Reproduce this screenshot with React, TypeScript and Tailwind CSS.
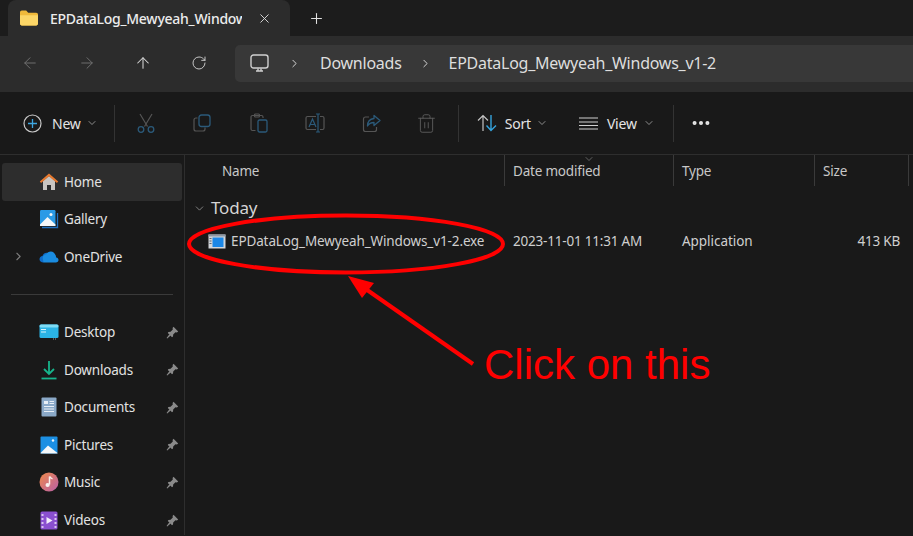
import React from 'react';
import { ArrowLeft, ArrowRight, ArrowUp, ChevronDown, ChevronRight, MoreHorizontal, Plus, RotateCw, Trash2, X } from 'lucide-react';

const FolderIcon = () => (
  <svg width="20" height="16" viewBox="0 0 20 16">
    <path d="M1 2.500C1 1.400 1.800 .6 2.800 .6h4.400l2 2.200h8c1 0 1.800.8 1.800 1.800v9c0 1-.8 1.800-1.800 1.800H2.800C1.800 15.400 1 14.600 1 13.600z" fill="#f0b93a" />
    <path d="M1 5.200h18v8.400c0 1-.8 1.800-1.800 1.800H2.800c-1 0-1.800-.8-1.800-1.800z" fill="#fcd667" />
  </svg>
);

const Pin = () => (
  <svg width="13" height="13" viewBox="0 0 13 13" fill="#8a8a8a">
    <path d="M7.500 .8 12.200 5.500 10.900 6.400 9.400 6.200 7.200 8.400 7 10.600 6 11.200 1.800 7 2.400 6 4.600 5.800 6.800 3.600 6.600 2.100z" />
    <path d="M3.400 8.300 4.700 9.600 1.200 12.600.6 12z" />
  </svg>
);

const HomeIcon = () => (
  <svg width="20" height="20" viewBox="0 0 20 20">
    <path d="M4 9 10 4l6 5v9h-4v-5H8v5H4z" fill="#c9c5c1" />
    <path d="M10 1.500 .8 9.600l1.300 1.300L10 4.200l7.900 6.700 1.300-1.300z" fill="#e8792e" />
  </svg>
);

const GalleryIcon = () => (
  <svg width="20" height="20" viewBox="0 0 20 20">
    <path d="M3 18.500h15.500V4" fill="none" stroke="#1f6fc0" strokeWidth="1.300" />
    <rect x="1" y="1" width="15.500" height="16" rx="1.200" fill="#2a9ae6" />
    <path d="M1 15.500 8.500 8l8 7.500V17H1z" fill="#f4f6f8" />
    <circle cx="12" cy="5.500" r="1.500" fill="#f4f6f8" />
  </svg>
);

const CloudIcon = () => (
  <svg width="20" height="13" viewBox="0 0 20 13">
    <path d="M4.500 12.500C2 12.500 .5 11 .5 9.200 .5 7.500 1.800 6.200 3.500 6 4.300 3.800 6 2.800 7.500 2.800c1.300 0 2.500.7 3.200 1.800z" fill="#0f6cc9" />
    <path d="M4.500 12.500h12.300c1.600 0 2.700-1.100 2.700-2.500s-1-2.400-2.300-2.500C16.800 4 14.500 1.500 11.800 1.500c-2 0-3.600 1-4.500 2.800C5 4.500 3.500 6.500 3.800 8.500z" fill="#1a8ce0" />
  </svg>
);

const DesktopIcon = () => (
  <svg width="20" height="16" viewBox="0 0 20 16">
    <rect x=".5" y=".5" width="19" height="13.500" rx="1.500" fill="#2bb4e6" />
    <rect x=".5" y=".5" width="19" height="3" rx="1.500" fill="#7fdcf5" />
    <rect x="2" y="5" width="5" height="1" fill="#d6f3fb" />
    <rect x="2" y="7.500" width="5" height="1" fill="#d6f3fb" />
    <path d="M14 14.500h1v1h-1zM16 14.500h1v1h-1z" fill="#9a9a9a" />
  </svg>
);

const DownloadIcon = () => (
  <svg width="16" height="20" viewBox="0 0 16 20" fill="none" stroke="#17b58c" strokeWidth="1.800">
    <path d="M8 1v13M3 9l5 5 5-5" />
    <path d="M.5 18.500h15" />
  </svg>
);

const DocumentsIcon = () => (
  <svg width="16" height="20" viewBox="0 0 16 20">
    <rect x=".5" y=".5" width="15" height="19" rx="1" fill="#8ba9c8" />
    <rect x="3" y="4" width="4" height="3" fill="#e8eef5" />
    <path d="M8.500 4.500H13M8.500 6.500H13M3 9.500h10M3 12h10M3 14.500h10" stroke="#e8eef5" />
  </svg>
);

const PicturesIcon = () => (
  <svg width="18" height="18" viewBox="0 0 18 18">
    <rect x=".5" y=".5" width="17" height="17" rx="1" fill="#1c8fe3" />
    <path d="M.5 17 8 9.500l9.500 7.500v.5H.5z" fill="#f4f7fa" />
    <circle cx="13" cy="4.500" r="1.200" fill="#f4f7fa" />
  </svg>
);

const MusicIcon = () => (
  <svg width="20" height="20" viewBox="0 0 20 20">
    <defs>
      <linearGradient id="musicFill" x1="0" y1="0" x2="1" y2="1">
        <stop offset="0" stopColor="#ef8a4a" />
        <stop offset="1" stopColor="#b85ea8" />
      </linearGradient>
    </defs>
    <circle cx="10" cy="10" r="9.500" fill="url(#musicFill)" />
    <path d="M10.500 4.500v8" stroke="#f8f0ee" strokeWidth="1.500" />
    <path d="M10.800 4.500c.5 1.800 2 2 2.700 2.300" stroke="#f8f0ee" strokeWidth="1.300" fill="none" />
    <circle cx="8.600" cy="13" r="2.100" fill="#f8f0ee" />
  </svg>
);

const VideosIcon = () => (
  <svg width="18" height="19" viewBox="0 0 18 19">
    <rect x=".5" y=".5" width="17" height="18" rx="1.500" fill="#8a4fd0" />
    <path d="M1.500 3h2v2h-2zM1.500 7h2v2h-2zM1.500 11h2v2h-2zM1.500 15h2v2h-2zM14.500 3h2v2h-2zM14.500 7h2v2h-2zM14.500 11h2v2h-2zM14.500 15h2v2h-2z" fill="#d9c2f2" />
    <path d="M6.500 6v7l6-3.500z" fill="#f3ecfb" />
  </svg>
);

const ExeIcon = () => (
  <svg width="18" height="15" viewBox="0 0 18 15">
    <rect x=".5" y=".5" width="17" height="14" fill="#d3d6da" />
    <rect x=".5" y=".5" width="17" height="2" fill="#8d97a3" />
    <rect x="4.500" y="3.500" width="11" height="9.500" fill="#1b87e6" />
    <path d="M1.500 4h2v1h-2zM1.500 6.500h2v1h-2zM1.500 9h2v1h-2z" fill="#5d6670" />
  </svg>
);

const sideTop = [
  { label: 'Home', icon: <HomeIcon />, active: true },
  { label: 'Gallery', icon: <GalleryIcon /> },
  { label: 'OneDrive', icon: <CloudIcon />, expand: true },
];

const sidePinned = [
  { label: 'Desktop', icon: <DesktopIcon /> },
  { label: 'Downloads', icon: <DownloadIcon /> },
  { label: 'Documents', icon: <DocumentsIcon /> },
  { label: 'Pictures', icon: <PicturesIcon /> },
  { label: 'Music', icon: <MusicIcon /> },
  { label: 'Videos', icon: <VideosIcon /> },
];

type SideItem = { label: string; icon: React.ReactNode; active?: boolean; expand?: boolean };

const SideRow = ({ item, pinned }: { item: SideItem; pinned?: boolean }) => (
  <div className={`flex h-[37.6px] items-center rounded-[3px] ${item.active ? 'bg-[#2d2d2d]' : ''}`}>
    <div className="w-[37px] pl-[10px]">
      {item.expand && <ChevronRight size={13} strokeWidth={2} className="text-[#7c7c7c]" />}
    </div>
    <div className="flex w-[20px] justify-center">{item.icon}</div>
    <span className="ml-[5px] text-[13.5px] tracking-[-0.2px] text-[#e2e2e2]">{item.label}</span>
    {pinned && (
      <span className="ml-auto mr-[3px]">
        <Pin />
      </span>
    )}
  </div>
);

// toolbar icons drawn by hand, the blue accents are dimmed because nothing is selected
const CutIcon = () => (
  <svg width="18" height="20" viewBox="0 0 18 20" fill="none">
    <path d="M3 1l7.500 12.500M15 1 7.500 13.500" stroke="#555" strokeWidth="1.200" />
    <circle cx="4" cy="16.500" r="2.800" stroke="#2b5a7a" strokeWidth="1.300" />
    <circle cx="14" cy="16.500" r="2.800" stroke="#2b5a7a" strokeWidth="1.300" />
  </svg>
);

const CopyIcon = () => (
  <svg width="18" height="18" viewBox="0 0 18 18" fill="none">
    <path d="M4.500 4H3C1.800 4 1 4.800 1 6v9c0 1.200.8 2 2 2h7c1.200 0 2-.8 2-2v-1.500" stroke="#555" strokeWidth="1.200" />
    <rect x="6" y="1" width="11" height="11.500" rx="2.500" stroke="#2b5a7a" strokeWidth="1.300" />
  </svg>
);

const PasteIcon = () => (
  <svg width="18" height="20" viewBox="0 0 18 20" fill="none">
    <path d="M5.500 17.500H2.500c-.8 0-1.500-.7-1.500-1.500V4c0-.8.700-1.500 1.500-1.500h9c.8 0 1.500.7 1.500 1.500v1" stroke="#555" strokeWidth="1.200" />
    <rect x="4.500" y="1" width="5" height="3" rx="1" stroke="#555" strokeWidth="1.200" />
    <rect x="8" y="7" width="9" height="12" rx="1.500" stroke="#2b5a7a" strokeWidth="1.300" />
  </svg>
);

const RenameIcon = () => (
  <svg width="20" height="20" viewBox="0 0 20 20" fill="none">
    <path d="M11 3.500H2.500c-.8 0-1.500.7-1.500 1.500v10c0 .8.7 1.500 1.500 1.500H11M15 3.500h2.500c.8 0 1.500.7 1.500 1.500v10c0 .8-.7 1.500-1.500 1.500H15" stroke="#555" strokeWidth="1.200" />
    <path d="M13 1v18M11 1h4M11 19h4" stroke="#2b5a7a" strokeWidth="1.200" />
    <path d="M4 14 7.500 6 11 14M5.200 11.500h4.600" stroke="#2b5a7a" strokeWidth="1.200" />
  </svg>
);

const ShareIcon = () => (
  <svg width="19" height="19" viewBox="0 0 19 19" fill="none">
    <path d="M7 3H3.500C2.300 3 1.500 3.800 1.500 5v10.500c0 1.200.8 2 2 2h9c1.200 0 2-.8 2-2V13" stroke="#555" strokeWidth="1.200" />
    <path d="M12 1.500l6 5-6 5V8.500c-3 0-5 1-6.500 3.500 0-4 2.500-7 6.500-7.500z" stroke="#2b5a7a" strokeWidth="1.300" strokeLinejoin="round" />
  </svg>
);

const SortIcon = () => (
  <svg width="20" height="18" viewBox="0 0 20 18" fill="none">
    <path d="M6 17V1.500M1 6.500l5-5 5 5" stroke="#c4c4c4" strokeWidth="1.200" />
    <path d="M14 1v15.500M9.500 11.500l4.500 5 5-5" stroke="#35a3dc" strokeWidth="1.400" />
  </svg>
);

const ViewIcon = () => (
  <svg width="19" height="13" viewBox="0 0 19 13" fill="none" stroke="#d0d0d0" strokeWidth="1.100">
    <path d="M0 1h19M0 5h19M0 8.500h19M0 12h19" />
  </svg>
);

const MonitorIcon = () => (
  <svg width="19" height="19" viewBox="0 0 19 19" fill="none" stroke="#cfcfcf" strokeWidth="1.400">
    <rect x="1" y="1" width="17" height="13" rx="2.500" />
    <path d="M6 17h7M8 14.500v2M11 14.500v2" />
  </svg>
);

const PlusCircle = () => (
  <svg width="19" height="19" viewBox="0 0 19 19" fill="none">
    <circle cx="9.500" cy="9.500" r="8.500" stroke="#c9c9c9" strokeWidth="1.200" />
    <path d="M9.500 5v9M5 9.500h9" stroke="#3ea6e0" strokeWidth="1.300" />
  </svg>
);

const Separator = ({ className }: { className: string }) => <div className={`h-[37px] w-px bg-[#333] ${className}`} />;

const columns = [
  { label: 'Name', width: 'w-[320px]', pad: 'pl-[37px]' },
  { label: 'Date modified', width: 'w-[169px]', pad: 'pl-[8px]' },
  { label: 'Type', width: 'w-[141px]', pad: 'pl-[8px]' },
  { label: 'Size', width: 'w-[94px]', pad: 'pl-[8px]' },
];

export default function App() {
  return (
    <div className="relative h-[536px] w-[913px] overflow-hidden bg-[#191919] font-['Noto_Sans',sans-serif] text-[#e4e4e4]">
      {/* Tab strip */}
      <div className="flex h-[36px] items-end bg-[#1c1c1c] pl-[8px]">
        <div className="flex h-[36px] w-[282px] items-center rounded-t-[8px] bg-[#2c2c2c] pl-[11px]">
          <FolderIcon />
          <span className="ml-[11px] w-[192px] overflow-hidden whitespace-nowrap text-[14px] font-medium tracking-[-0.25px] text-[#ececec]">
            EPDataLog_Mewyeah_Windows_v1-2
          </span>
          <X size={15} strokeWidth={1.5} className="ml-[15px] text-[#dcdcdc]" />
        </div>
        <div className="flex h-[36px] items-center pl-[18px]">
          <Plus size={17} strokeWidth={1.5} className="text-[#e0e0e0]" />
        </div>
      </div>

      {/* Nav + address bar */}
      <div className="flex h-[56px] items-center bg-[#2c2c2c] pb-[2px]">
        <ArrowLeft size={18} strokeWidth={1.3} className="ml-[21px] text-[#707070]" />
        <ArrowRight size={18} strokeWidth={1.3} className="ml-[39px] text-[#707070]" />
        <ArrowUp size={18} strokeWidth={1.4} className="ml-[38px] text-[#d8d8d8]" />
        <RotateCw size={16} strokeWidth={1.4} className="ml-[39px] text-[#d0d0d0]" />
        <div className="ml-[28px] flex h-[37px] flex-1 items-center rounded-l-[5px] bg-[#383838] pl-[15px]">
          <MonitorIcon />
          <ChevronRight size={13} strokeWidth={1.8} className="ml-[19px] text-[#d8d8d8]" />
          <span className="ml-[19px] text-[16px] tracking-[-0.25px] text-[#dedede]">Downloads</span>
          <ChevronRight size={13} strokeWidth={1.8} className="ml-[17px] text-[#d8d8d8]" />
          <span className="ml-[17px] text-[16px] tracking-[-0.25px] text-[#dedede]">EPDataLog_Mewyeah_Windows_v1-2</span>
        </div>
      </div>

      {/* Command bar */}
      <div className="flex h-[63px] items-center border-b border-[#2e2e2e] bg-[#191919]">
        <span className="ml-[23px]"><PlusCircle /></span>
        <span className="ml-[10px] text-[14px] tracking-[-0.2px]">New</span>
        <ChevronDown size={12} strokeWidth={1.6} className="ml-[5px] text-[#a8a8a8]" />
        <Separator className="ml-[16px]" />
        <span className="ml-[22px]"><CutIcon /></span>
        <span className="ml-[38px]"><CopyIcon /></span>
        <span className="ml-[39px]"><PasteIcon /></span>
        <span className="ml-[37px]"><RenameIcon /></span>
        <span className="ml-[37px]"><ShareIcon /></span>
        <Trash2 size={21} strokeWidth={1.1} className="ml-[35px] text-[#5a5a5a]" />
        <Separator className="ml-[21px]" />
        <span className="ml-[18px]"><SortIcon /></span>
        <span className="ml-[8px] text-[14px] tracking-[-0.2px]">Sort</span>
        <ChevronDown size={12} strokeWidth={1.6} className="ml-[5px] text-[#a8a8a8]" />
        <span className="ml-[31px]"><ViewIcon /></span>
        <span className="ml-[9px] text-[14px] tracking-[-0.2px]">View</span>
        <ChevronDown size={12} strokeWidth={1.6} className="ml-[6px] text-[#a8a8a8]" />
        <Separator className="ml-[18px]" />
        <MoreHorizontal size={22} strokeWidth={2.4} className="ml-[16px] text-[#e8e8e8]" />
      </div>

      <div className="flex h-[380px]">
        {/* Sidebar */}
        <aside className="w-[185px] shrink-0 border-r border-[#2e2e2e] pl-[2px] pr-[2px] pt-[8px]">
          {sideTop.map((item) => (
            <SideRow key={item.label} item={item} />
          ))}
          <div className="mx-[9px] mb-[18px] mt-[18.5px] h-px bg-[#3a3a3a]" />
          {sidePinned.map((item) => (
            <SideRow key={item.label} item={item} pinned />
          ))}
        </aside>

        {/* File list */}
        <main className="relative flex-1">
          <div className="flex h-[31px]">
            {columns.map((col) => (
              <div key={col.label} className={`flex items-center border-r border-[#3a3a3a] pt-[2px] ${col.width} ${col.pad} text-[13.5px] tracking-[-0.2px] text-[#c8c8c8]`}>
                {col.label}
              </div>
            ))}
          </div>
          <ChevronDown size={12} strokeWidth={1.3} className="absolute left-[398px] top-[-2px] text-[#8a8a8a]" />
          <div className="mt-[10px] flex h-[24px] items-center pl-[8px]">
            <ChevronDown size={13} strokeWidth={1.4} className="text-[#a0a0a0]" />
            <span className="ml-[5px] text-[17px] tracking-[-0.2px] text-[#d4d4d4]">Today</span>
          </div>
          <div className="mt-[9px] flex h-[24px] items-center text-[13.5px] tracking-[-0.2px] text-[#cfcfcf]">
            <div className="flex w-[320px] items-center pl-[23px]">
              <ExeIcon />
              <span className="ml-[5px] whitespace-nowrap tracking-[-0.12px]">EPDataLog_Mewyeah_Windows_v1-2.exe</span>
            </div>
            <div className="w-[169px] pl-[8px]">2023-11-01 11:31 AM</div>
            <div className="w-[141px] pl-[8px] tracking-[-0.05px]">Application</div>
            <div className="w-[85px] text-right">413 KB</div>
          </div>
        </main>
      </div>

      {/* Red annotation drawn on top of the screenshot */}
      <svg className="pointer-events-none absolute left-0 top-0" width="913" height="536" viewBox="0 0 913 536" fill="none">
        <ellipse cx="346" cy="244" rx="157" ry="28.5" stroke="#ff0000" strokeWidth="4" />
        <path d="M473 364 360 285" stroke="#ff0000" strokeWidth="4" />
        <path d="M348 276 374 283 362 298z" fill="#ff0000" />
      </svg>
      <span className="absolute left-[484px] top-[341px] font-['Liberation_Sans',sans-serif] text-[42px] leading-[48px] text-[#ff0000]">
        Click on this
      </span>
    </div>
  );
}
